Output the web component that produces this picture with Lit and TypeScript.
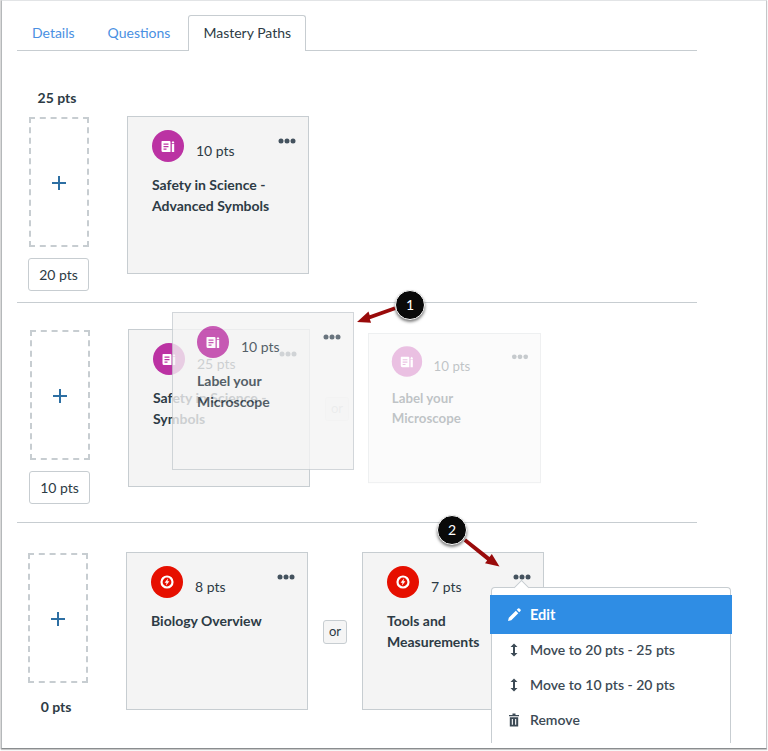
import { LitElement, html, css, svg } from "lit";
import { customElement } from "lit/decorators.js";

type PathCard = { kind: "quiz" | "bolt"; pts: string; title: string[] };

const dots = html`<svg class="dots" width="18" height="6" viewBox="0 0 18 6">
  <circle cx="3" cy="3" r="2.5"></circle>
  <circle cx="9" cy="3" r="2.5"></circle>
  <circle cx="15" cy="3" r="2.5"></circle>
</svg>`;

const quizIcon = svg`<path d="M10 11h7.500a1 1 0 0 1 1 1v10H11a1.500 1.500 0 0 1-1.500-1.500V11.500zM11.500 13.500v1.200h5v-1.200zM11.500 16v1.200h5V16zM11.500 18.500v1.200h3v-1.200z" fill-rule="evenodd" fill="#fff"></path>
  <path d="M19.800 14h2.400v8h-2.400zM19.800 12.300l1.200-1.300 1.200 1.300v1h-2.400z" fill="#fff"></path>`;

const boltIcon = svg`<circle cx="16" cy="16" r="5.500" fill="none" stroke="#fff" stroke-width="2.200"></circle>
  <path d="M17.200 12.300l-3.600 4.400h2l-.8 3 3.600-4.400h-2z" fill="#fff"></path>`;

@customElement("path-card")
export class PathCardEl extends LitElement {
  static properties = { card: { type: Object } };
  card!: PathCard;

  static styles = css`
    :host {
      display: block;
    }
    .card {
      box-sizing: border-box;
      width: 182px;
      height: 158px;
      padding: 13px 12px 0 24px;
      background: #f4f4f4;
      border: 1px solid #c7cdd1;
      position: relative;
      color: #2d3b45;
    }
    .top {
      display: flex;
      height: 32px;
    }
    .icon {
      width: 32px;
      height: 32px;
      border-radius: 50%;
      display: block;
      flex: none;
    }
    .icon.quiz {
      background: #bb32a3;
    }
    .icon.bolt {
      background: #e60f00;
    }
    .pts {
      margin: 11px 0 0 12px;
      line-height: 20px;
    }
    .dots {
      position: absolute;
      right: 12px;
      top: 21px;
      fill: #44525e;
    }
    .title {
      margin-top: 12px;
      font-weight: 700;
      line-height: 21px;
    }
  `;

  render() {
    const c = this.card;
    return html`<div class="card">
      <div class="top">
        <svg class="icon ${c.kind}" viewBox="0 0 32 32">
          ${c.kind === "quiz" ? quizIcon : boltIcon}
        </svg>
        <div class="pts">${c.pts}</div>
      </div>
      ${dots}
      <div class="title">${c.title.map((t) => html`<div>${t}</div>`)}</div>
    </div>`;
  }
}

@customElement("app-root")
export class AppRoot extends LitElement {
  static styles = css`
    :host {
      display: block;
      position: relative;
      width: 768px;
      height: 751px;
      overflow: hidden;
      background: #fff;
      font: 14px/20px Lato, "Open Sans", sans-serif;
      color: #2d3b45;
    }
    .frame {
      box-sizing: border-box;
      width: 766px;
      height: 749px;
      margin-left: 1px;
      padding: 14px 0 0 15px;
      border-top: 1px solid #e2e4e6;
      border-left: 1px solid #b5b8ba;
      border-right: 1px solid #c4c6c8;
      border-bottom: 1px solid #8a8d8f;
      box-shadow: 0 1px 1px rgba(0, 0, 0, 0.2), -1px 0 1px rgba(0, 0, 0, 0.12);
    }
    .content {
      width: 680px;
    }
    .tabs {
      display: flex;
      gap: 3px;
      height: 36px;
      box-sizing: border-box;
      border-bottom: 1px solid #c7cdd1;
    }
    .tab {
      padding: 8px 15px 0;
      height: 36px;
      box-sizing: border-box;
      color: #4a90e2;
    }
    .tab.active {
      color: #2d3b45;
      background: #fff;
      border: 1px solid #c7cdd1;
      border-bottom: none;
      border-radius: 3px 3px 0 0;
      padding: 7px 14px 0;
    }
    .row {
      display: flex;
      align-items: flex-start;
      position: relative;
      box-sizing: border-box;
    }
    .row + .row {
      border-top: 1px solid #c7cdd1;
    }
    .r1 {
      height: 251px;
      padding: 37px 0 0 11px;
    }
    .r2 {
      height: 220px;
      padding: 27px 0 0 12px;
    }
    .r3 {
      height: 200px;
      padding: 30px 0 0 10px;
    }
    .range {
      width: 61px;
      display: flex;
      flex-direction: column;
      align-items: flex-end;
      flex: none;
    }
    .dash {
      box-sizing: border-box;
      width: 60px;
      height: 130px;
      display: flex;
      align-items: center;
      justify-content: center;
      border: 2px dashed #c7cdd1;
    }
    .plus {
      display: block;
      margin-top: 2px;
    }
    .low {
      box-sizing: border-box;
      width: 61px;
      height: 33px;
      margin-top: 11px;
      border: 1px solid #c7cdd1;
      border-radius: 3px;
      text-align: center;
      line-height: 31px;
    }
    .label {
      width: 61px;
      padding-right: 3px;
      box-sizing: border-box;
      text-align: center;
      font-weight: 700;
    }
    .label.top {
      margin-bottom: 9px;
    }
    .label.bottom {
      margin-top: 14px;
    }
    .paths {
      display: flex;
      align-items: center;
      margin: -1px 0 0 38px;
    }
    .r1 .paths {
      margin-top: 28px;
    }
    .or {
      box-sizing: border-box;
      width: 24px;
      height: 24px;
      margin: 2px 15px 0;
      background: #f5f5f5;
      border: 1px solid #c7cdd1;
      border-radius: 3px;
      text-align: center;
      font-size: 13px;
      line-height: 21px;
    }
    .or.ghost {
      opacity: 0.25;
      margin-right: 19px;
    }
    .ghost-card {
      width: 173px;
      height: 150px;
      align-self: flex-start;
      margin-top: 4px;
      opacity: 0.3;
    }
    .ghost-card path-card {
      transform: scale(0.95);
      transform-origin: 0 0;
    }
    .drag {
      position: absolute;
      left: 155px;
      top: 9px;
      opacity: 0.8;
    }
    .annot {
      position: absolute;
      left: 0;
      top: 0;
      pointer-events: none;
    }
    .badge {
      position: absolute;
      width: 30px;
      height: 30px;
      border-radius: 50%;
      background: #0a0a0a;
      border: 1px solid #fff;
      box-sizing: border-box;
      box-shadow: 0 2px 3px rgba(0, 0, 0, 0.5);
      color: #fff;
      text-align: center;
      line-height: 28px;
      font-size: 14px;
    }
    .b1 {
      left: 395px;
      top: 290px;
    }
    .b2 {
      left: 437px;
      top: 515px;
    }
    .menu {
      position: absolute;
      left: 491px;
      top: 587px;
      width: 240px;
      height: 156px;
      box-sizing: border-box;
      background: #fff;
      border: 1px solid #c7cdd1;
      border-bottom: none;
      border-radius: 4px 4px 0 0;
      padding-top: 7px;
      color: #3c4a55;
      font-weight: 600;
    }
    .menu::before {
      content: "";
      position: absolute;
      left: 24px;
      top: -6px;
      width: 10px;
      height: 10px;
      background: #fff;
      border-left: 1px solid #c7cdd1;
      border-top: 1px solid #c7cdd1;
      transform: rotate(45deg);
    }
    .item {
      display: flex;
      align-items: center;
      height: 35px;
      padding-left: 15px;
      gap: 9px;
      position: relative;
    }
    .item svg {
      width: 14px;
      height: 16px;
      flex: none;
      fill: #3c4a55;
    }
    .item.edit {
      height: 39px;
      margin: 0 -2px -2px -2px;
      padding-left: 17px;
      background: #2f8de4;
      color: #fff;
      font-size: 14.500px;
      font-weight: 700;
      z-index: 1;
    }
    .item.edit svg {
      fill: #fff;
    }
  `;

  private moveIcon() {
    return html`<svg viewBox="0 0 14 16">
      <path d="M7 1.500l3.500 3.500H8v6h2.500L7 14.500 3.500 11H6V5H3.500z"></path>
    </svg>`;
  }

  private plus() {
    return html`<svg class="plus" width="14" height="14" viewBox="0 0 14 14">
      <path d="M6 0h2v6h6v2H8v6H6V8H0V6h6z" fill="#2d6fa3"></path>
    </svg>`;
  }

  render() {
    const safety = (title: string[]): PathCard => ({ kind: "quiz", pts: "25 pts", title });
    return html`<div class="frame">
        <div class="content">
          <div class="tabs">
            <div class="tab">Details</div>
            <div class="tab">Questions</div>
            <div class="tab active">Mastery Paths</div>
          </div>

          <div class="row r1">
            <div class="range">
              <div class="label top">25 pts</div>
              <div class="dash">${this.plus()}</div>
              <div class="low">20 pts</div>
            </div>
            <div class="paths">
              <path-card
                .card=${{ kind: "quiz", pts: "10 pts", title: ["Safety in Science -", "Advanced Symbols"] }}
              ></path-card>
            </div>
          </div>

          <div class="row r2">
            <div class="range">
              <div class="dash">${this.plus()}</div>
              <div class="low">10 pts</div>
            </div>
            <div class="paths">
              <path-card .card=${safety(["Safety in Science -", "Symbols"])}></path-card>
              <div class="or ghost">or</div>
              <div class="ghost-card">
                <path-card
                  .card=${{ kind: "quiz", pts: "10 pts", title: ["Label your", "Microscope"] }}
                ></path-card>
              </div>
            </div>
            <path-card
              class="drag"
              .card=${{ kind: "quiz", pts: "10 pts", title: ["Label your", "Microscope"] }}
            ></path-card>
          </div>

          <div class="row r3">
            <div class="range">
              <div class="dash">${this.plus()}</div>
              <div class="label bottom">0 pts</div>
            </div>
            <div class="paths">
              <path-card .card=${{ kind: "bolt", pts: "8 pts", title: ["Biology Overview"] }}></path-card>
              <div class="or">or</div>
              <path-card .card=${{ kind: "bolt", pts: "7 pts", title: ["Tools and", "Measurements"] }}></path-card>
            </div>
          </div>
        </div>
      </div>

      <div class="menu">
        <div class="item edit">
          <svg viewBox="0 0 14 16">
            <path d="M11 1.500a1 1 0 0 1 1.400 0l1.100 1.100a1 1 0 0 1 0 1.400l-1.300 1.300-2.500-2.500zM8.800 3.700l2.500 2.500-7 7-3.300.8.800-3.300z"></path>
          </svg>
          Edit
        </div>
        <div class="item">${this.moveIcon()} Move to 20 pts - 25 pts</div>
        <div class="item">${this.moveIcon()} Move to 10 pts - 20 pts</div>
        <div class="item">
          <svg viewBox="0 0 14 16">
            <path d="M5.500 1.500h3V3H12v1.300H2V3h3.500zM2.800 5.200h8.400v9.300H2.800zM4.800 7v5.800h1.100V7zM8.100 7v5.800h1.100V7z" fill-rule="evenodd"></path>
          </svg>
          Remove
        </div>
      </div>

      <svg class="annot" width="768" height="751" viewBox="0 0 768 751">
        <path d="M394.400 306.600l1.200 3.400-25.800 9.200 1.300 3.500L357 322l11.500-10.500 1.200 3.800z" fill="#990b0b"></path>
        <path d="M466 538.600l-2.200 2.800 23.400 19-2.200 2.900 14.500 3.200-7.700-12.400-2.300 2.800z" fill="#990b0b"></path>
      </svg>
      <div class="badge b1">1</div>
      <div class="badge b2">2</div>`;
  }
}
